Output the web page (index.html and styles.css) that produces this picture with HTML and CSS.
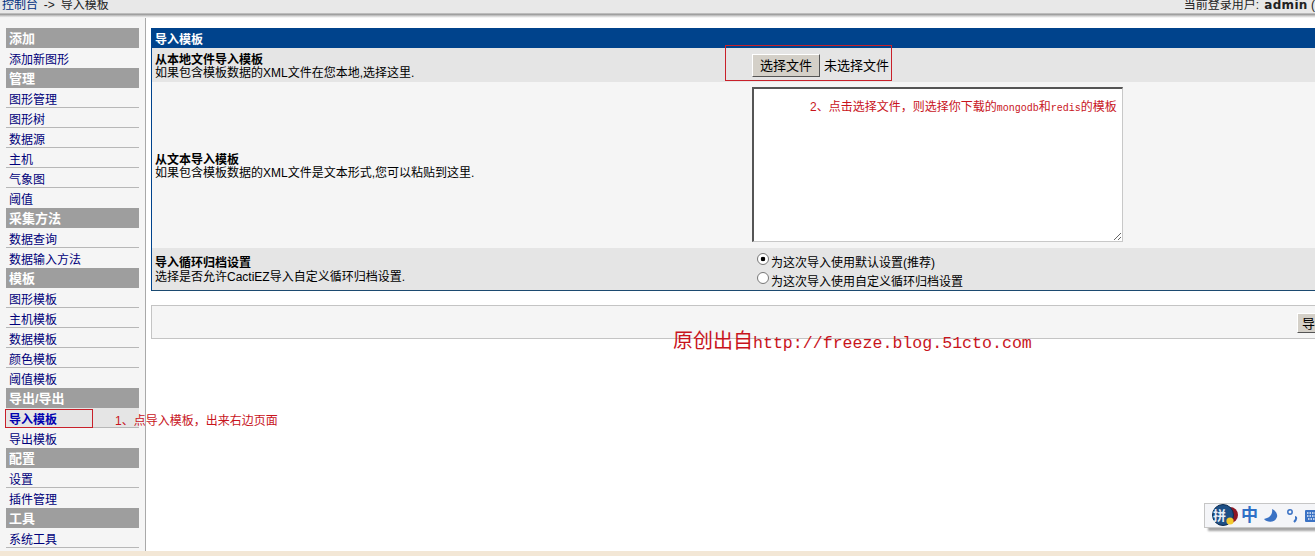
FILE: index.html
```html
<!DOCTYPE html>
<html lang="zh-CN">
<head>
<meta charset="utf-8">
<title>导入模板</title>
<link rel="stylesheet" href="styles.css">
</head>
<body>
<header class="topbar">
  <div class="crumbs"><a href="#">控制台</a> -&gt; 导入模板</div>
  <div class="user">当前登录用户: <b>admin</b> (退出)</div>
</header>
<div class="shell">
  <nav class="side">
    <div class="sec">添加</div>
    <a class="item" href="#">添加新图形</a>
    <div class="sec">管理</div>
    <a class="item" href="#">图形管理</a>
    <a class="item" href="#">图形树</a>
    <a class="item" href="#">数据源</a>
    <a class="item" href="#">主机</a>
    <a class="item" href="#">气象图</a>
    <a class="item" href="#">阈值</a>
    <div class="sec">采集方法</div>
    <a class="item" href="#">数据查询</a>
    <a class="item" href="#">数据输入方法</a>
    <div class="sec">模板</div>
    <a class="item" href="#">图形模板</a>
    <a class="item" href="#">主机模板</a>
    <a class="item" href="#">数据模板</a>
    <a class="item" href="#">颜色模板</a>
    <a class="item" href="#">阈值模板</a>
    <div class="sec">导出/导出</div>
    <a class="item active" href="#">导入模板</a>
    <a class="item" href="#">导出模板</a>
    <div class="sec">配置</div>
    <a class="item" href="#">设置</a>
    <a class="item" href="#">插件管理</a>
    <div class="sec">工具</div>
    <a class="item" href="#">系统工具</a>
  </nav>
  <main class="main">
    <section class="panel">
      <h1 class="panel-title">导入模板</h1>
      <div class="row row-file">
        <div class="label"><strong>从本地文件导入模板</strong><span>如果包含模板数据的XML文件在您本地,选择这里.</span></div>
        <div class="field file"><button class="btn" type="button">选择文件</button><span class="nofile">未选择文件</span></div>
      </div>
      <div class="row row-text">
        <div class="label"><strong>从文本导入模板</strong><span>如果包含模板数据的XML文件是文本形式,您可以粘贴到这里.</span></div>
        <div class="field area-wrap"><textarea class="area"></textarea></div>
      </div>
      <div class="row row-rra">
        <div class="label"><strong>导入循环归档设置</strong><span>选择是否允许CactiEZ导入自定义循环归档设置.</span></div>
        <div class="field radios">
          <label class="radio"><input type="radio" name="rra" checked>为这次导入使用默认设置(推荐)</label>
          <label class="radio"><input type="radio" name="rra">为这次导入使用自定义循环归档设置</label>
        </div>
      </div>
    </section>
    <div class="actions"><button class="btn" type="button">导入</button></div>
  </main>
</div>
<div class="strip"></div>

<div class="mark mark-file"></div>
<div class="mark mark-nav"></div>
<div class="note note-nav">1、点导入模板，出来右边页面</div>
<div class="note note-file">2、点击选择文件，则选择你下载的<i>mongodb</i>和<i>redis</i>的模板</div>
<div class="water">原创出自<i>http://freeze.blog.51cto.com</i></div>

<div class="ime">
  <svg class="ime-logo" width="28" height="26" viewBox="0 0 28 26">
    <circle cx="20" cy="12" r="8" fill="#8e1622"/>
    <circle cx="13" cy="12" r="10.5" fill="#1d4f86" stroke="#0d2c50" stroke-width="1"/>
    <circle cx="20" cy="18" r="3.6" fill="#f2c92e"/>
  </svg>
  <span class="ime-pin">拼</span>
  <span class="ime-zh">中</span>
  <svg class="ime-moon" width="16" height="16" viewBox="0 0 16 16"><path d="M9 1C10 6 7 10 1 11C4 15 12 15 14 9C15 6 12 2 9 1Z" fill="#3a72c4"/></svg>
  <svg class="ime-punc" width="12" height="16" viewBox="0 0 12 16"><circle cx="4" cy="4" r="2.2" fill="none" stroke="#3a72c4" stroke-width="1.5"/><path d="M9 9C10.5 9 11 11 8 14" fill="none" stroke="#3a72c4" stroke-width="2"/></svg>
  <svg width="15" height="12" viewBox="0 0 15 12"><rect width="15" height="12" rx="1" fill="#3a72c4"/><path d="M2 3H13M2 6H13M3 9H12" stroke="#e8eefa" stroke-width="1.4" stroke-dasharray="1.5 1"/></svg>
</div>
</body>
</html>
```
FILE: styles.css
```css
* { box-sizing: border-box; }
html, body { margin: 0; height: 100%; overflow: hidden; }
body {
  width: 1315px;
  height: 556px;
  position: relative;
  background: #fff;
  color: #000;
  font: 12px/13px "Liberation Sans", "Noto Sans CJK SC", sans-serif;
  display: flex;
  flex-direction: column;
}
a { text-decoration: none; color: #00007a; }

.topbar {
  flex: none;
  height: 18px;
  display: flex;
  justify-content: space-between;
  padding: 0 0 0 2px;
  background: linear-gradient(#e8e8e8 0, #e8e8e8 13px, #8f8f8f 14px, #d0d0d0 16px, #fff 18px);
  white-space: nowrap;
  overflow: hidden;
  font-size: 12px;
  line-height: 11px;
  color: #222;
}
.crumbs { word-spacing: 2.5px; }
.crumbs a { color: #00307f; }
.user { margin-right: -28px; }
.user b { font-family: "DejaVu Sans", sans-serif; letter-spacing: .3px; margin-left: 2px; }

.shell { flex: 1; display: flex; min-height: 0; }

.side {
  flex: none;
  width: 146px;
  padding: 10px 6px 0;
  background: #f5f5f5;
  border-right: 1px solid #a9a9a9;
}
.sec {
  height: 20px;
  padding: 3px 0 0 3px;
  line-height: 16px;
  font-size: 13px;
  font-weight: 700;
  color: #fff;
  background: #9e9e9e;
}
.item {
  display: block;
  height: 20px;
  padding: 5px 0 0 3px;
  line-height: 14px;
  font-size: 12px;
  border-bottom: 1px solid #b7b7b7;
}
.item:has(+ .sec) { border-bottom-color: #f5f5f5; }
.item.active { background: #e5e5e5; font-weight: 700; color: #0000b0; }

.main { flex: 1; min-width: 0; padding: 10px 0 0 5px; overflow: hidden; }

.panel {
  width: 1200px;
  border-left: 1px solid #00438c;
  border-bottom: 1px solid #1c4a70;
}
.panel-title {
  margin: 0;
  height: 20px;
  padding: 5px 0 0 3px;
  font-size: 12px;
  line-height: 14px;
  font-weight: 700;
  color: #fff;
  background: #00438c;
}
.row {
  display: grid;
  grid-template-columns: 600px 1fr;
  align-items: center;
}
.label { padding: 3px 0 0 3px; }
.label strong, .label span { display: block; }
.label strong { font-weight: 700; }
.row-file { height: 34px; background: #e5e5e5; }
.row-text { height: 166px; background: #f5f5f5; }
.row-rra { height: 42px; background: #e5e5e5; }
.row-rra .label { padding-top: 3px; }
.row-rra .label span { margin-top: 1px; }

.file { display: flex; align-items: center; padding-top: 0; }
.btn {
  height: 23px;
  padding: 0 7px;
  font: 13px/1 "Liberation Sans", "Noto Sans CJK SC", sans-serif;
  color: #000;
  background: #d4d0c8;
  border: 1px solid;
  border-color: #fff #555 #555 #fff;
  border-radius: 0;
}
.nofile { margin-left: 4px; font-size: 13px; }
.area-wrap { padding-bottom: 1px; }
.area {
  display: block;
  width: 371px;
  height: 155px;
  margin: 0;
  background: #fff;
  border: 1px solid;
  border-color: #555 #c8c8c8 #c8c8c8 #555;
  border-width: 2px 1px 1px 2px;
}
.radios { display: flex; flex-direction: column; gap: 6px; padding: 8px 0 0 5px; }
.radio { display: flex; align-items: center; height: 13px; }
.radio input {
  appearance: none;
  flex: none;
  width: 12px;
  height: 12px;
  margin: -9px 2px 0 0;
  border-radius: 50%;
  border: 1px solid #777;
  background: #fff;
}
.radio input:checked { background: radial-gradient(circle, #000 2px, #fff 2.6px); }

.actions {
  width: 1200px;
  height: 34px;
  margin-top: 14px;
  background: #f5f5f5;
  border: 1px solid #c4c4c4;
  border-width: 1px 0 1px 1px;
  padding: 7px 0 0 1145px;
}
.actions .btn { height: 20px; white-space: nowrap; padding: 0 4px; }

.strip { flex: none; height: 5px; background: #f3e7d6; }

.mark { position: absolute; border: 1px solid #c8202a; }
.mark-file { left: 725px; top: 45px; width: 167px; height: 36px; }
.mark-nav { left: 5px; top: 409px; width: 88px; height: 19px; }

.note { position: absolute; color: #c8141c; white-space: nowrap; font-size: 12px; line-height: 14px; }
.note i, .water i { font-style: normal; font-family: "Liberation Mono", monospace; }
.note i { font-size: 10px; }
.note-nav { left: 115px; top: 414px; }
.note-file { left: 810px; top: 100px; }
.water {
  position: absolute;
  left: 673px;
  top: 330px;
  color: #c8141c;
  font-size: 20px;
  line-height: 22px;
  white-space: nowrap;
}
.water i { font-size: 16.6px; }

.ime {
  position: absolute;
  left: 1204px;
  top: 503px;
  width: 120px;
  height: 25px;
  display: flex;
  align-items: center;
  gap: 4px;
  padding-left: 5px;
  background: #f4f5f8;
  border: 1px solid #c6c6c6;
  box-shadow: 4px 3px 2px #a5a5a5;
}
.ime-logo { margin-right: -1px; }
.ime-pin {
  position: absolute;
  left: 8px;
  top: 4px;
  font-size: 13px;
  line-height: 15px;
  font-weight: 700;
  color: #e7eef7;
}
.ime-zh { font-size: 17px; line-height: 18px; font-weight: 700; color: #2f6fc6; }
.ime-moon { margin-left: 1px; }
.ime-punc { margin: 0 3px 0 3px; }
```
